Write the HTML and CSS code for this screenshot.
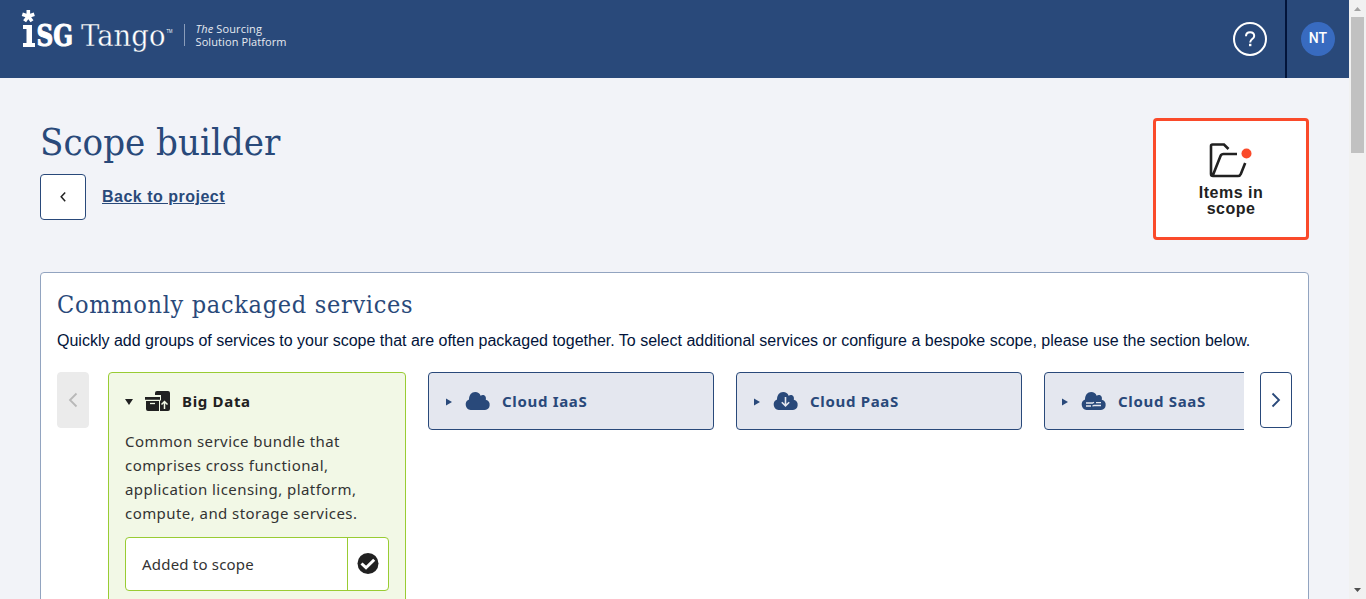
FILE: index.html
```html
<!DOCTYPE html>
<html lang="en">
<head>
<meta charset="utf-8">
<title>Scope builder</title>
<link rel="stylesheet" href="styles.css">
</head>
<body>
<div class="viewport">
  <div class="page">
    <header class="topbar">
      <svg class="logo" width="300" height="78" viewBox="0 0 300 78">
        <g stroke="#fff" stroke-width="3.6"><path d="M28.3 16.2V10M28.3 16.2L22.3 14.3M28.3 16.2L34.3 14.3M28.3 16.2L24.6 21.3M28.3 16.2L32 21.3"/></g>
        <path fill="#fff" d="M23 25h9v18h3v4H23v-4h3.500V29H23z"/>
        <text class="logo-isg" x="36.500" y="46.300" textLength="36.500" lengthAdjust="spacingAndGlyphs">SG</text>
        <text class="logo-tango" x="81" y="46" textLength="84.500" lengthAdjust="spacingAndGlyphs">Tango</text>
        <text class="logo-tm" x="166.500" y="33" textLength="6" lengthAdjust="spacingAndGlyphs">TM</text>
        <path stroke="#8a9dba" d="M184.500 24v22"/>
        <text class="logo-tag" x="195.500" y="32.500" textLength="66.500"><tspan font-style="italic">The</tspan> Sourcing</text>
        <text class="logo-tag" x="195.500" y="45.500" textLength="91">Solution Platform</text>
      </svg>
      <div class="help">
        <svg width="36" height="36" viewBox="0 0 36 36" fill="none" stroke="#fff"><circle cx="18" cy="18" r="16" stroke-width="2"/><path stroke-width="2" d="M14 15.200c0-2.500 1.700-4 4.100-4s4.100 1.500 4.100 3.700c0 3.200-4 3.200-4 6.600"/><path stroke-width="2.400" d="M18.200 22.800v2.400"/></svg>
      </div>
      <div class="account"><span class="avatar">NT</span></div>
    </header>
    <main class="content">
      <section class="intro">
        <div>
          <h1 class="title">Scope builder</h1>
          <div class="back">
            <button class="back-button" aria-label="Back"><svg width="8" height="12" viewBox="0 0 8 12" fill="none" stroke="#212121" stroke-width="1.500"><path d="M6.200 1.500L2.200 5.700l4 4.500"/></svg></button>
            <a class="back-link">Back to project</a>
          </div>
        </div>
        <button class="scope-button">
          <svg class="folder" width="44" height="36" viewBox="0 0 44 36" fill="none" stroke="#212121" stroke-width="2.600"><path d="M19.500 7L15 2.500H3.500Q2 2.500 2 4v28q0 2 2 2h25q2 0 2.800-2l4.400-11M4 33l7.500-19q.8-2 3-2H28"/><circle cx="37.500" cy="11.500" r="5" fill="#fa4a2a" stroke="none"/></svg>
          <span>Items in scope</span>
        </button>
      </section>
      <section class="panel">
        <h2 class="panel-title">Commonly packaged services</h2>
        <p class="panel-text">Quickly add groups of services to your scope that are often packaged together. To select additional services or configure a bespoke scope, please use the section below.</p>
        <div class="carousel">
          <button class="nav prev" aria-label="Previous"><svg width="12" height="16" viewBox="0 0 12 16" fill="none" stroke="#b8b8b8" stroke-width="1.800"><path d="M9.500 1.500L3 8l6.500 6.500"/></svg></button>
          <div class="track">
            <article class="card open">
              <div class="card-head">
                <svg class="caret" width="8" height="8" viewBox="0 0 8 8" fill="#212121"><path d="M0 1h8L4 7z"/></svg>
                <svg class="card-icon" width="26" height="22" viewBox="0 0 26 22"><path fill="#212121" d="M10 5V3q0-2 2-2h11q2 0 2 2v16q0 2-2 2h-8V10.500h1V5z"/><path fill="#212121" d="M0 7h15v2.700H0zM1 11h13v10H3q-2 0-2-2z"/><path stroke="#f2f8e6" fill="none" stroke-width="1.300" d="M5 13.500h5"/><path stroke="#f2f8e6" fill="none" stroke-width="1.500" d="M19.500 19v-7M16.500 14.500l3-3 3 3"/></svg>
                <h3 class="card-title">Big Data</h3>
              </div>
              <p class="card-text">Common service bundle that comprises cross functional, application licensing, platform, compute, and storage services.</p>
              <div class="added">
                <span class="added-label">Added to scope</span>
                <span class="added-check"><svg width="22" height="22" viewBox="0 0 22 22"><circle cx="11" cy="10.500" r="10.500" fill="#212121"/><path d="M4.500 10.500l4.500 4.200 8.200-8" fill="none" stroke="#fff" stroke-width="3"/></svg></span>
              </div>
            </article>
            <article class="card">
              <div class="card-head">
                <svg class="caret" width="8" height="10" viewBox="0 0 8 10" fill="#29497a"><path d="M1 1.500v7L7 5z"/></svg>
                <svg class="card-icon" width="26" height="18" viewBox="0 0 26 18" fill="#29497a"><path d="M5.500 18a5.500 5.500 0 0 1-1.500-10.500C4 3 6.500 0 10.200 0c2.600 0 4.500 1.300 5.400 3.700 2.800-1.800 6.200.2 5.200 4.100A5.200 5.200 0 0 1 20 18z"/></svg>
                <h3 class="card-title">Cloud IaaS</h3>
              </div>
            </article>
            <article class="card">
              <div class="card-head">
                <svg class="caret" width="8" height="10" viewBox="0 0 8 10" fill="#29497a"><path d="M1 1.500v7L7 5z"/></svg>
                <svg class="card-icon" width="26" height="18" viewBox="0 0 26 18" fill="#29497a"><path d="M5.500 18a5.500 5.500 0 0 1-1.500-10.500C4 3 6.500 0 10.200 0c2.600 0 4.500 1.300 5.400 3.700 2.800-1.800 6.200.2 5.200 4.100A5.200 5.200 0 0 1 20 18z"/><path fill="none" stroke="#e4e7ef" stroke-width="1.600" d="M12.500 5v8.500M8.800 10.200l3.700 3.700 3.700-3.700"/></svg>
                <h3 class="card-title">Cloud PaaS</h3>
              </div>
            </article>
            <article class="card">
              <div class="card-head">
                <svg class="caret" width="8" height="10" viewBox="0 0 8 10" fill="#29497a"><path d="M1 1.500v7L7 5z"/></svg>
                <svg class="card-icon" width="26" height="18" viewBox="0 0 26 18" fill="#29497a"><path d="M5.500 18a5.500 5.500 0 0 1-1.500-10.500C4 3 6.500 0 10.200 0c2.600 0 4.500 1.300 5.400 3.700 2.800-1.800 6.200.2 5.200 4.100A5.200 5.200 0 0 1 20 18z"/><path fill="none" stroke="#e4e7ef" stroke-width="1.300" d="M5 11h6.500l1.500-.8M15 10.700h5M5 14h5M11.500 14.200l1.500-.7h7"/></svg>
                <h3 class="card-title">Cloud SaaS</h3>
              </div>
            </article>
          </div>
          <button class="nav next" aria-label="Next"><svg width="12" height="16" viewBox="0 0 12 16" fill="none" stroke="#29497a" stroke-width="1.800"><path d="M2.500 1.500L9 8l-6.500 6.500"/></svg></button>
        </div>
      </section>
    </main>
  </div>
  <div class="scrollbar">
    <svg class="arrow" width="17" height="17" viewBox="0 0 17 17"><path fill="#a3a3a3" d="M5 11h7L8.500 7z"/></svg>
    <div class="thumb"></div>
    <svg class="arrow" width="17" height="17" viewBox="0 0 17 17"><path fill="#505050" d="M5 6h7l-3.500 4z"/></svg>
  </div>
</div>
</body>
</html>
```
FILE: styles.css
```css
* { box-sizing: border-box; }
body { margin: 0; overflow: hidden; font-family: "Liberation Sans", Arial, sans-serif; color: #212121; }
h1, h2, h3, p { margin: 0; }
svg { display: block; flex: none; }
button { padding: 0; font: inherit; color: inherit; background: #fff; }
.viewport { display: flex; width: 1366px; height: 599px; overflow: hidden; }
.page { width: 1349px; height: 599px; overflow: hidden; background: #f2f3f8; }
.topbar { display: flex; height: 78px; background: #29497a; color: #fff; }
.logo { margin-right: auto; fill: #fff; }
.logo-isg { font: bold 29px "DejaVu Serif", serif; stroke: #fff; stroke-width: 1; }
.logo-tango { font: 29px "DejaVu Serif", serif; stroke: #29497a; stroke-width: .35; }
.logo-tm { font: 5px "Open Sans", sans-serif; }
.logo-tag { font: 11px "Open Sans", sans-serif; fill: #e6eaf1; }
.help { display: flex; align-items: center; padding-right: 17px; }
.account { display: flex; align-items: center; width: 64px; padding-left: 14px; border-left: 2px solid #02143a; }
.avatar { width: 34px; height: 34px; border-radius: 50%; background: #386bc0; font: 500 14px/33px Roboto, sans-serif; text-align: center; }
.content { padding: 40px 40px 0; }
.intro { display: flex; justify-content: space-between; height: 154px; }
.title { width: max-content; height: 56px; font: 38px/48px "DejaVu Serif Condensed", "DejaVu Serif", serif; font-stretch: condensed; color: #29497a; }
.back { display: flex; align-items: center; gap: 16px; }
.back-button { display: flex; align-items: center; justify-content: center; width: 46px; height: 46px; border: 1px solid #29497a; border-radius: 4px; }
.back-link { font-size: 16px; font-weight: bold; letter-spacing: .5px; color: #29497a; text-decoration: underline; }
.scope-button { display: flex; flex-direction: column; align-items: center; width: 156px; height: 122px; padding: 21px 36px 0; border: 3px solid #fa4a2a; border-radius: 4px; font-size: 16px; font-weight: bold; line-height: 16px; letter-spacing: .5px; }
.folder { margin-bottom: 7px; }
.panel { height: 400px; padding: 14px 16px; border: 1px solid #92a4c0; border-radius: 4px 4px 0 0; background: #fff; }
.panel-title { width: max-content; font: 25px/36px "DejaVu Serif Condensed", "DejaVu Serif", serif; font-stretch: condensed; letter-spacing: .7px; color: #29497a; }
.panel-text { padding-top: 8px; font-size: 16px; line-height: 20px; white-space: nowrap; color: #02143a; }
.carousel { display: flex; align-items: flex-start; padding-top: 21px; }
.nav { display: flex; flex: none; align-items: center; justify-content: center; width: 32px; height: 56px; border: 1px solid #29497a; border-radius: 4px; }
.prev { border-color: #ebebeb; background: #ebebeb; }
.track { display: flex; align-items: flex-start; gap: 22px; width: 1136px; margin: 0 16px 0 19px; overflow: hidden; }
.card { flex: none; width: 286px; height: 58px; padding: 0 16px; border: 1px solid #29497a; border-radius: 4px; background: #e4e7ef; color: #29497a; }
.open { width: 298px; height: 260px; border-color: #9c3; background: #f2f8e6; color: #212121; }
.card-head { display: flex; align-items: center; height: 56px; }
.caret { width: 8px; margin: 2px 12px 0 0; }
.card-icon { margin-right: 11px; }
.card-title { font: bold 15px/22px "Noto Sans", sans-serif; letter-spacing: .68px; }
.card-text { font: 15px/24px "Noto Sans", sans-serif; letter-spacing: .44px; color: #333; }
.added { display: flex; height: 54px; margin-top: 12px; border: 1px solid #9c3; border-radius: 4px; background: #fff; font: 15px/52px "Noto Sans", sans-serif; letter-spacing: .2px; color: #333; }
.added-label { flex: 1; padding-left: 16px; }
.added-check { display: flex; align-items: center; justify-content: center; width: 41px; border-left: 1px solid #9c3; }
.scrollbar { display: flex; flex-direction: column; width: 17px; background: #f1f1f1; }
.thumb { width: 13px; height: 136px; margin: 0 auto auto; background: #c1c1c1; }
```
